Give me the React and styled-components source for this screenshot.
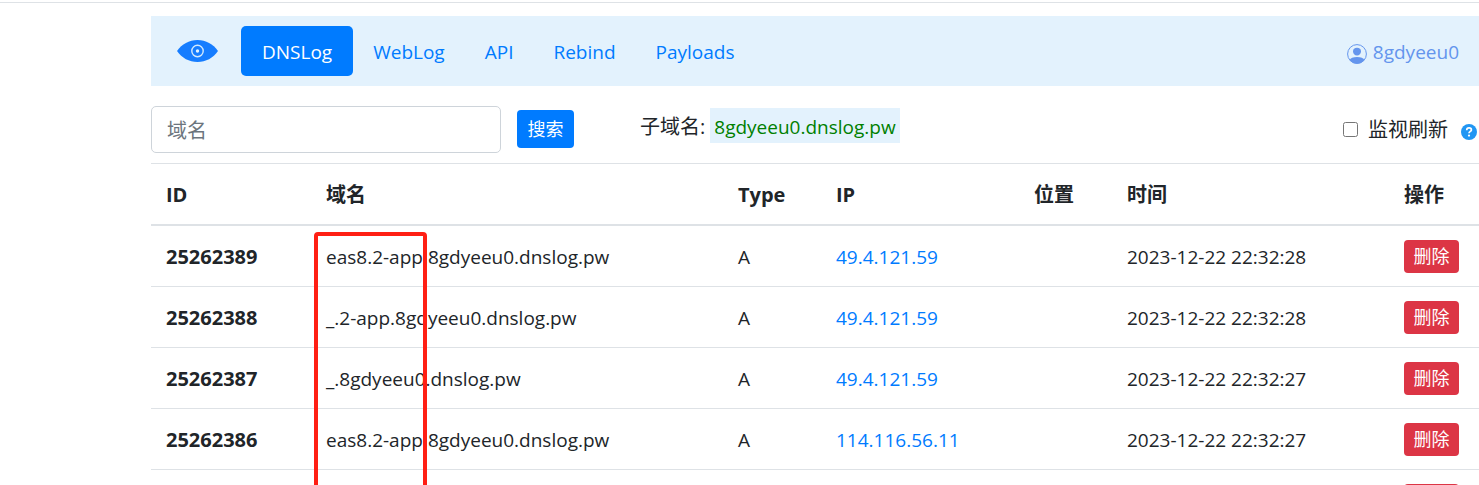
import React, { useState } from 'react';
import styled, { createGlobalStyle } from 'styled-components';

const GlobalStyle = createGlobalStyle`
    *, *::before, *::after {
        box-sizing: border-box;
    }

    body {
        margin: 0;
        background: #fff;
        color: #212529;
        font-family: "Open Sans", "Noto Sans CJK SC", sans-serif;
        font-size: 19px;
        line-height: 30px;
    }

    a {
        text-decoration: none;
    }

    button, input {
        font-family: inherit;
    }
`;

const Page = styled.div`
    height: 100vh;
    padding: 2px 0 0 151px;
    overflow: hidden;
    background: linear-gradient(#dee2e6, #dee2e6) 0 2px / 100% 1px no-repeat;
`;

const Navbar = styled.nav`
    display: flex;
    align-items: center;
    height: 70px;
    margin-top: 14px;
    padding: 0 20px 0 26px;
    background: #e3f2fd;
`;

const Brand = styled.a`
    display: flex;
    margin-right: 23px;
`;

const NavLink = styled.a`
    padding: 11px ${props => props.$active ? '21px' : '20px'} 9px;
    border-radius: 5px;
    background: ${props => props.$active ? '#007bff' : 'transparent'};
    color: ${props => props.$active ? '#fff' : '#007bff'};
`;

const UserLink = styled.a`
    display: flex;
    align-items: center;
    gap: 6px;
    margin-left: auto;
    padding-top: 2px;
    color: cornflowerblue;

    svg {
        margin-top: 3px;
    }
`;

const Toolbar = styled.form`
    display: flex;
    align-items: center;
    height: 47px;
    margin: 20px 0 10px;
`;

const SearchInput = styled.input`
    width: 350px;
    height: 47px;
    margin-right: 16px;
    padding: 2px 15px 0;
    border: 1px solid #ced4da;
    border-radius: 5px;
    font-size: 20px;

    &::placeholder {
        color: #6c757d;
        opacity: 1;
    }
`;

const Button = styled.button`
    min-width: ${props => props.$small ? '55px' : '57px'};
    height: ${props => props.$small ? '33px' : '38px'};
    padding: 0 9px;
    border: 0;
    border-radius: 4px;
    background: ${props => props.$danger ? '#dc3545' : '#007bff'};
    color: #fff;
    font-size: 18px;
    line-height: 30px;
    vertical-align: middle;
    cursor: pointer;
`;

const SearchButton = styled(Button)`
    margin-bottom: 2px;
`;

const Subdomain = styled.div`
    display: flex;
    align-items: baseline;
    gap: 5px;
    margin: 0 auto 8px 66px;
    font-size: 20px;
`;

const SubdomainValue = styled.span`
    padding: 4px 4px 1px;
    background: #e3f2fd;
    color: green;
    font-size: 19px;
`;

const WatchLabel = styled.label`
    display: flex;
    align-items: center;
    gap: 10px;
    margin-right: 13px;
    font-size: 20px;
`;

const Checkbox = styled.input`
    width: 15px;
    height: 15px;
    margin: 0;
`;

const HelpLink = styled.a`
    display: flex;
    margin: 4px 2px 0 0;
`;

const TableArea = styled.div`
    position: relative;
`;

const Table = styled.table`
    width: 100%;
    border-spacing: 0;
    table-layout: fixed;
`;

const HeadCell = styled.th`
    width: ${props => props.$width};
    padding: 16px 15px 14px;
    border-top: 1px solid #dee2e6;
    border-bottom: 2px solid #dee2e6;
    font-size: 20px;
    font-weight: 700;
    text-align: left;
`;

const Cell = styled.td`
    height: 61px;
    padding: 2px 15px 0;
    border-bottom: 1px solid #dee2e6;
    white-space: nowrap;
`;

const IdCell = styled(Cell).attrs({ as: 'th', scope: 'row' })`
    font-size: 20px;
    font-weight: 700;
    text-align: left;
`;

const ActionCell = styled(Cell)`
    padding-top: 0;
`;

const IpLink = styled.a`
    color: #007bff;
`;

// red frame drawn over the prefixes in the domain column
const Highlight = styled.div`
    position: absolute;
    top: 69px;
    left: 163px;
    width: 113px;
    height: 320px;
    border: 4px solid #ff1f14;
    border-radius: 4px;
    pointer-events: none;
`;

const tabs = ['DNSLog', 'WebLog', 'API', 'Rebind', 'Payloads'];

const columns = [
    { title: 'ID', width: '160px' },
    { title: '域名', width: 'auto' },
    { title: 'Type', width: '98px' },
    { title: 'IP', width: '198px' },
    { title: '位置', width: '93px' },
    { title: '时间', width: '277px' },
    { title: '操作', width: '90px' },
];

const records = [
    { id: '25262389', domain: 'eas8.2-app.8gdyeeu0.dnslog.pw', type: 'A', ip: '49.4.121.59', time: '2023-12-22 22:32:28' },
    { id: '25262388', domain: '_.2-app.8gdyeeu0.dnslog.pw', type: 'A', ip: '49.4.121.59', time: '2023-12-22 22:32:28' },
    { id: '25262387', domain: '_.8gdyeeu0.dnslog.pw', type: 'A', ip: '49.4.121.59', time: '2023-12-22 22:32:27' },
    { id: '25262386', domain: 'eas8.2-app.8gdyeeu0.dnslog.pw', type: 'A', ip: '114.116.56.11', time: '2023-12-22 22:32:27' },
    { id: '' },
];

const EyeIcon = () => (
    <svg width="41" height="22" viewBox="0 0 41 22" aria-hidden="true">
        <path d="M0 11C5 4 12 0 20.500 0S36 4 41 11C36 18 29 22 20.500 22S5 18 0 11Z" fill="#167dff" />
        <circle cx="20.500" cy="11" r="5.700" fill="none" stroke="#d3e9fd" strokeWidth="1.400" />
        <circle cx="20.500" cy="11" r="1.700" fill="#e3f2fd" />
    </svg>
);

const UserIcon = () => (
    <svg width="20" height="20" viewBox="0 0 20 20" aria-hidden="true">
        <circle cx="10" cy="10" r="9.400" fill="none" stroke="currentColor" strokeWidth="1" />
        <path d="M6 7.300C6 5 7.500 3.700 10 3.700S14 5 14 7.300C14 9.800 12.300 11.600 10 11.600S6 9.800 6 7.300Z" fill="currentColor" />
        <path d="M2.500 16C3.500 14 6 12.900 10 12.900S16.500 14 17.500 16C15.700 18.400 13 19.700 10 19.700S4.300 18.400 2.500 16Z" fill="currentColor" />
    </svg>
);

const HelpIcon = () => (
    <svg width="16" height="16" viewBox="0 0 16 16" aria-hidden="true">
        <circle cx="8" cy="8" r="8" fill="#2196f3" />
        <path d="M5.700 6.200C5.700 4.700 6.700 3.900 8.100 3.900S10.400 4.700 10.400 5.900C10.400 7.400 8 7.500 8 9.300" fill="none" stroke="#fff" strokeWidth="1.700" />
        <circle cx="8" cy="11.600" r="1.100" fill="#fff" />
    </svg>
);

export default function App() {
    const [active, setActive] = useState('DNSLog');
    const [query, setQuery] = useState('');
    const [watching, setWatching] = useState(false);

    return (
        <Page>
            <GlobalStyle />
            <Navbar>
                <Brand href="#home">
                    <EyeIcon />
                </Brand>
                {tabs.map(tab => (
                    <NavLink
                        key={tab}
                        href={'#' + tab}
                        $active={active === tab}
                        onClick={() => setActive(tab)}
                    >
                        {tab}
                    </NavLink>
                ))}
                <UserLink href="#user">
                    <UserIcon />
                    8gdyeeu0
                </UserLink>
            </Navbar>
            <Toolbar onSubmit={e => e.preventDefault()}>
                <SearchInput
                    type="text"
                    name="domain"
                    placeholder="域名"
                    aria-label="域名"
                    value={query}
                    onChange={e => setQuery(e.target.value)}
                />
                <SearchButton type="submit">搜索</SearchButton>
                <Subdomain>
                    子域名:
                    <SubdomainValue>8gdyeeu0.dnslog.pw</SubdomainValue>
                </Subdomain>
                <WatchLabel>
                    <Checkbox
                        type="checkbox"
                        checked={watching}
                        onChange={e => setWatching(e.target.checked)}
                    />
                    监视刷新
                </WatchLabel>
                <HelpLink href="#help">
                    <HelpIcon />
                </HelpLink>
            </Toolbar>
            <TableArea>
                <Table>
                    <thead>
                        <tr>
                            {columns.map(column => (
                                <HeadCell key={column.title} scope="col" $width={column.width}>
                                    {column.title}
                                </HeadCell>
                            ))}
                        </tr>
                    </thead>
                    <tbody>
                        {records.map(record => (
                            <tr key={record.id}>
                                <IdCell>{record.id}</IdCell>
                                <Cell>{record.domain}</Cell>
                                <Cell>{record.type}</Cell>
                                <Cell>{record.ip && <IpLink href={'#' + record.ip}>{record.ip}</IpLink>}</Cell>
                                <Cell />
                                <Cell>{record.time}</Cell>
                                <ActionCell>
                                    <Button type="button" $small $danger>{record.id && '删除'}</Button>
                                </ActionCell>
                            </tr>
                        ))}
                    </tbody>
                </Table>
                <Highlight />
            </TableArea>
        </Page>
    );
}
